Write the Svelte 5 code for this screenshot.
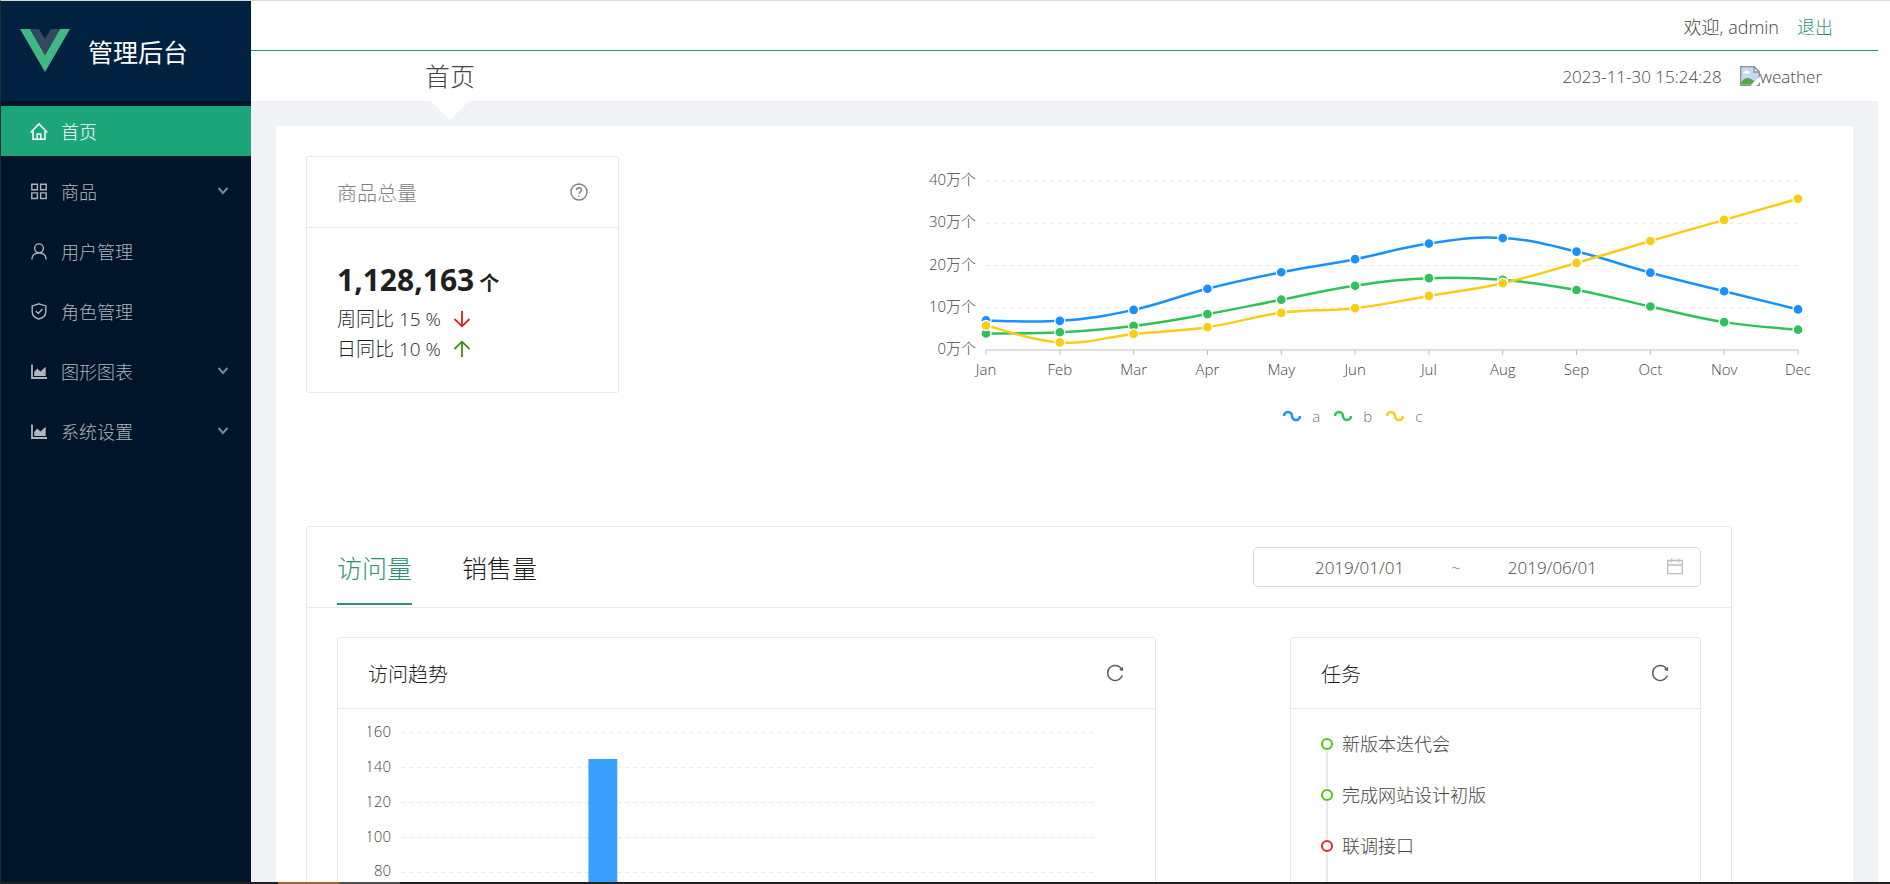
<script>
  const menu = [
    { title: '首页', icon: 'home', active: true },
    { title: '商品', icon: 'appstore', sub: true },
    { title: '用户管理', icon: 'user' },
    { title: '角色管理', icon: 'safety' },
    { title: '图形图表', icon: 'area', sub: true },
    { title: '系统设置', icon: 'area', sub: true }
  ];

  const months = ['Jan', 'Feb', 'Mar', 'Apr', 'May', 'Jun', 'Jul', 'Aug', 'Sep', 'Oct', 'Nov', 'Dec'];
  const series = [
    { name: 'a', color: '#1890ff', data: [7, 6.9, 9.5, 14.5, 18.4, 21.5, 25.2, 26.5, 23.3, 18.3, 13.9, 9.6] },
    { name: 'b', color: '#2fc25b', data: [3.9, 4.2, 5.7, 8.5, 11.9, 15.2, 17, 16.6, 14.2, 10.3, 6.6, 4.8] },
    { name: 'c', color: '#facc14', data: [5.8, 1.8, 3.8, 5.4, 8.8, 9.9, 12.8, 15.8, 20.6, 25.8, 30.8, 35.8] }
  ];
  const visits = [38, 52, 61, 145, 48, 38, 28, 39, 28, 39, 28, 38];

  const tasks = [
    { text: '新版本迭代会', color: '#52c41a' },
    { text: '完成网站设计初版', color: '#52c41a' },
    { text: '联调接口', color: '#e02a33' },
    { text: '功能验收', color: '#e02a33' }
  ];

  let tab = $state('visits');
  let startDate = $state('2019/01/01');
  let endDate = $state('2019/06/01');

  // 图表宽度跟随容器
  let lineWidth = $state(925);
  let barWidth = $state(757);

  const lineLeft = 88;
  const lineStep = $derived((lineWidth - lineLeft - 25) / 11);
  const lineY = (v) => 194 - v * 4.225;

  const barLeft = 33;
  const barPlot = $derived(barWidth - barLeft - 32);
  const barStep = $derived(barPlot / 12);
  const barY = (v) => 303 - v * 1.745;

  // 平滑曲线
  function smooth(data, step) {
    const p = data.map((v, i) => [lineLeft + i * step, lineY(v)]);
    let d = `M${p[0][0]},${p[0][1]}`;
    for (let i = 0; i < p.length - 1; i++) {
      const p0 = p[i - 1] || p[i];
      const p1 = p[i];
      const p2 = p[i + 1];
      const p3 = p[i + 2] || p2;
      d += `C${p1[0] + (p2[0] - p0[0]) * 0.2},${p1[1] + (p2[1] - p0[1]) * 0.2} `;
      d += `${p2[0] - (p3[0] - p1[0]) * 0.2},${p2[1] - (p3[1] - p1[1]) * 0.2} ${p2[0]},${p2[1]}`;
    }
    return d;
  }
</script>

{#snippet reload()}
  <svg width="20" height="20" viewBox="0 0 1024 1024" fill="currentColor">
    <path d="M909.1 209.3l-56.4 44.1C775.8 155.1 656.2 92 521.9 92 290 92 102.300 279.500 102 511.500 101.700 743.700 289.800 932 521.900 932c181.300 0 335.800-115 394.600-276.100 1.500-4.200-.7-8.900-4.900-10.300l-56.700-19.500a8 8 0 0 0-10.100 4.800c-1.800 5-3.800 10-5.900 14.900-17.300 41-42.100 77.800-73.700 109.400A344.770 344.770 0 0 1 655.900 829c-42.300 17.900-87.400 27-133.800 27-46.500 0-91.500-9.100-133.800-27A341.500 341.500 0 0 1 279 755.200a342.160 342.160 0 0 1-73.700-109.400c-17.900-42.400-27-87.400-27-133.900s9.100-91.500 27-133.900c17.300-41 42.100-77.800 73.700-109.400 31.600-31.600 68.400-56.400 109.300-73.800 42.300-17.900 87.400-27 133.800-27 46.500 0 91.500 9.100 133.800 27a341.500 341.500 0 0 1 109.300 73.800c9.900 9.900 19.200 20.400 27.800 31.400l-60.200 47a8 8 0 0 0 3 14.100l175.600 43c5 1.200 9.900-2.600 9.900-7.700l.8-180.900c-.1-6.600-7.800-10.300-13-6.200z" />
  </svg>
{/snippet}

<div class="layout">
  <aside class="sider">
    <div class="logo">
      <svg width="50" height="43" viewBox="0 0 50 43">
        <path d="M0 0h10l15 26L40 0h10L25 43z" fill="#41b883" />
        <path d="M10 0h9l6 10 6-10h9L25 26z" fill="#35495e" />
      </svg>
      <h1>管理后台</h1>
    </div>
    <nav>
      {#each menu as item}
        <a href="#{item.title}" class="menu-item" class:active={item.active}>
          <svg class="menu-icon" width="18" height="18" viewBox="0 0 18 18" fill="none" stroke="currentColor">
            {#if item.icon === 'home'}
              <path d="M.6 10.500 9 1.900 17.400 10.500M3 9V17.200H15V9M7.200 17V12H10.800V17" stroke-width="1.500" />
            {:else if item.icon === 'appstore'}
              <path d="M1.800 2.200h5.600v5.600H1.800zM10.600 2.200h5.600v5.600h-5.600zM1.800 10.900h5.600v5.600H1.800zM10.600 10.900h5.600v5.600h-5.600z" stroke-width="1.400" />
            {:else if item.icon === 'user'}
              <circle cx="9" cy="6.300" r="4.400" stroke-width="1.400" />
              <path d="M1.800 17.500C1.800 13.500 5 10.700 9 10.700S16.200 13.500 16.200 17.500" stroke-width="1.400" />
            {:else if item.icon === 'safety'}
              <path d="M9 1.800 15.800 3.900V10C15.800 13.500 12.500 16 9 17 5.500 16 2.200 13.500 2.200 10V3.900zM5.800 9 8.300 11.500 12.400 7" stroke-width="1.400" />
            {:else}
              <path d="M2 2.500V16H17" stroke-width="1.800" />
              <path d="M4.200 14V10L7.300 6.500 10.500 9.500 15.700 4.700V14z" fill="currentColor" stroke="none" />
            {/if}
          </svg>
          <span>{item.title}</span>
          {#if item.sub}
            <svg class="arrow" width="12" height="8" viewBox="0 0 12 8" fill="none" stroke="currentColor">
              <path d="M1.500 1 6 6 10.500 1" stroke-width="2" />
            </svg>
          {/if}
        </a>
      {/each}
    </nav>
  </aside>

  <div class="body">
    <header class="header-top">
      <span>欢迎, admin</span>
      <a href="#logout">退出</a>
    </header>
    <div class="header-bottom">
      <h2 class="page-title">首页</h2>
      <div class="weather">
        <time>2023-11-30 15:24:28</time>
        <span class="weather-img">
          <svg width="20" height="20" viewBox="0 0 20 20">
            <path d="M.7.700h13.300L19.300 6v13.300H.7z" fill="#c5d8f5" stroke="#8f8f8f" stroke-width="1.300" />
            <path d="M14 .7V6h5.300z" fill="#fff" stroke="#8f8f8f" stroke-width="1.300" />
            <path d="M3 7.500Q3 5.500 5.200 5.500 6 3.500 8 5 10 5.200 10 7.500z" fill="#fff" />
            <path d="M1.400 18.600V16Q5 10.500 10 12.500L14.500 15 11 18.600z" fill="#58a93c" />
            <path d="M10.500 20 20 10.500V16L16 20z" fill="#fff" />
          </svg>weather
        </span>
      </div>
    </div>

    <main>
      <div class="content">
        <div class="overview">
          <section class="card">
            <div class="card-head muted">
              <h3>商品总量</h3>
              <button class="icon-btn" aria-label="help">
                <svg width="18" height="18" viewBox="0 0 18 18" fill="none" stroke="currentColor">
                  <circle cx="9" cy="9" r="8" stroke-width="1.400" />
                  <path d="M6.500 7.200C6.500 4 11.500 4 11.500 7.100 11.500 9 9 8.800 9 10.800" stroke-width="1.400" />
                  <circle cx="9" cy="13" r=".8" fill="currentColor" stroke="none" />
                </svg>
              </button>
            </div>
            <div class="card-body">
              <div class="total">1,128,163<small>个</small></div>
              <div class="ratio">
                周同比 15 %
                <svg width="18" height="18" viewBox="0 0 18 18" fill="none" stroke="#e0201b" stroke-width="1.800">
                  <path d="M9 1V16M1.500 9 9 16.300 16.500 9" />
                </svg>
              </div>
              <div class="ratio">
                日同比 10 %
                <svg width="18" height="18" viewBox="0 0 18 18" fill="none" stroke="#3f8f12" stroke-width="1.800">
                  <path d="M9 17V2M1.500 9 9 1.700 16.500 9" />
                </svg>
              </div>
            </div>
          </section>

          <div class="line-chart" bind:clientWidth={lineWidth}>
            <svg width={lineWidth} height="290">
              {#each [0, 10, 20, 30, 40] as v}
                {#if v > 0}
                  <line class="grid" x1={lineLeft} x2={lineWidth - 25} y1={lineY(v)} y2={lineY(v)} />
                {/if}
                <text x={lineLeft - 10} y={lineY(v) + 4} text-anchor="end">{v}万个</text>
              {/each}
              <line class="axis" x1={lineLeft} x2={lineWidth - 25} y1="194" y2="194" />
              {#each months as m, i}
                <line class="axis" x1={lineLeft + i * lineStep} x2={lineLeft + i * lineStep} y1="194" y2="199" />
                <text x={lineLeft + i * lineStep} y="219" text-anchor="middle">{m}</text>
              {/each}
              {#each series as s}
                <path d={smooth(s.data, lineStep)} fill="none" stroke={s.color} stroke-width="2.500" />
              {/each}
              {#each series as s}
                {#each s.data as v, i}
                  <circle cx={lineLeft + i * lineStep} cy={lineY(v)} r="5" fill={s.color} stroke="#fff" stroke-width="1.300" />
                {/each}
              {/each}
            </svg>
            <ul class="legend">
              {#each series as s}
                <li>
                  <svg width="18" height="12" viewBox="0 0 18 12" fill="none" stroke={s.color} stroke-width="2.500">
                    <path d="M1 6A4 4 0 0 1 9 6A4 4 0 0 0 17 6" />
                  </svg>
                  {s.name}
                </li>
              {/each}
            </ul>
          </div>
        </div>

        <section class="card stats">
          <div class="tabs-head">
            <div class="tabs">
              <button class:on={tab === 'visits'} onclick={() => (tab = 'visits')}>访问量</button>
              <button class:on={tab === 'sales'} onclick={() => (tab = 'sales')}>销售量</button>
            </div>
            <div class="range">
              <input type="text" aria-label="开始日期" bind:value={startDate} />
              <span>~</span>
              <input type="text" aria-label="结束日期" bind:value={endDate} />
              <svg width="18" height="18" viewBox="0 0 18 18" fill="none" stroke="#bfbfbf" stroke-width="1.400">
                <path d="M1.700 2.500H16.300V15.600H1.700zM1.700 7H16.300M5.500 .5V4.500M12.500 .5V4.500" />
              </svg>
            </div>
          </div>

          <div class="panels">
            <section class="card">
              <div class="card-head">
                <h3>访问趋势</h3>
                <button class="icon-btn" aria-label="reload">{@render reload()}</button>
              </div>
              <div class="bar-chart">
                <div bind:clientWidth={barWidth}>
                  <svg width={barWidth} height="340">
                    {#each [0, 20, 40, 60, 80, 100, 120, 140, 160] as v}
                      <line class="grid" x1={barLeft} x2={barLeft + barPlot} y1={barY(v)} y2={barY(v)} />
                      <text x={barLeft - 10} y={barY(v) + 4} text-anchor="end">{v}</text>
                    {/each}
                    {#each visits as v, i}
                      <rect x={barLeft + (i + 0.25) * barStep} y={barY(v)} width={barStep / 2} height={barY(0) - barY(v)} fill="#3aa0ff" />
                    {/each}
                  </svg>
                </div>
              </div>
            </section>

            <section class="card">
              <div class="card-head">
                <h3>任务</h3>
                <button class="icon-btn" aria-label="reload">{@render reload()}</button>
              </div>
              <ul class="timeline">
                {#each tasks as t}
                  <li><i style="border-color: {t.color}"></i>{t.text}</li>
                {/each}
              </ul>
            </section>
          </div>
        </section>
      </div>
    </main>
  </div>
</div>
<div class="taskbar"><i></i><b></b></div>

<style>
  :global(body) {
    margin: 0;
    background: #fff;
  }

  :global(#app) {
    display: flex;
    flex-direction: column;
    height: 100vh;
    overflow: hidden;
    font-family: 'Open Sans', 'Noto Sans CJK SC', sans-serif;
    font-size: 17px;
    font-weight: 300;
    color: #454545;
  }

  h1, h2, h3, ul {
    margin: 0;
    padding: 0;
    font-weight: inherit;
    list-style: none;
  }

  svg {
    display: block;
    flex: none;
  }

  a {
    color: #2d9275;
    text-decoration: none;
  }

  button {
    padding: 0;
    border: none;
    background: none;
    font: inherit;
    color: inherit;
    cursor: pointer;
  }

  .layout {
    flex: 1;
    min-height: 0;
    display: flex;
    border-top: 1px solid #d9d9d9;
    border-left: 1px solid #1d2b36;
    overflow: hidden;
  }

  .sider {
    flex: none;
    width: 250px;
    background: #001529;
  }

  .logo {
    display: flex;
    align-items: center;
    gap: 18px;
    height: 98px;
    padding: 0 0 2px 19px;
    background: #002140;
    color: #fff;
  }

  .logo h1 {
    padding-top: 3px;
    font-size: 25px;
    font-weight: 400;
    line-height: 38px;
  }

  nav {
    display: flex;
    flex-direction: column;
    gap: 10px;
    padding-top: 5px;
  }

  .menu-item {
    display: flex;
    align-items: center;
    height: 50px;
    padding: 0 22px 0 29px;
    font-size: 18px;
    color: #aeb5bb;
  }

  .menu-item.active {
    background: #1da57a;
    color: #fff;
  }

  .menu-icon {
    margin-right: 13px;
  }

  .arrow {
    margin-left: auto;
    color: #7d8791;
  }

  .body {
    flex: 1;
    min-width: 0;
    margin-right: 12px;
    display: flex;
    flex-direction: column;
  }

  .header-top {
    flex: none;
    display: flex;
    align-items: center;
    justify-content: flex-end;
    gap: 18px;
    height: 49px;
    padding: 0 45px;
    border-bottom: 1px solid #2d9275;
    font-size: 18px;
  }

  .header-bottom {
    flex: none;
    display: flex;
    align-items: center;
    justify-content: space-between;
    height: 50px;
    padding-right: 56px;
  }

  .page-title {
    position: relative;
    width: 398px;
    text-align: center;
    font-size: 25px;
    line-height: 50px;
  }

  .page-title::after {
    content: '';
    position: absolute;
    top: 100%;
    left: 50%;
    margin-left: -19px;
    border: 19px solid transparent;
    border-top-color: #fff;
    border-bottom: none;
  }

  .weather,
  .weather-img {
    display: flex;
    align-items: center;
  }

  .weather {
    gap: 18px;
  }

  main {
    flex: 1;
    min-height: 0;
    overflow-y: auto;
    scrollbar-width: none;
    padding: 25px 25px 0;
    background: #f0f2f5;
  }

  .content {
    padding: 30px;
    background: #fff;
  }

  .overview {
    display: flex;
    align-items: flex-start;
    justify-content: space-between;
    height: 370px;
  }

  .overview .card {
    width: 311px;
  }

  .card {
    border: 1px solid #e8e8e8;
    border-radius: 3px;
  }

  .card-head {
    display: flex;
    align-items: center;
    justify-content: space-between;
    height: 70px;
    padding: 0 30px;
    border-bottom: 1px solid #e8e8e8;
    color: #1f1f1f;
  }

  .card-head h3 {
    padding-top: 3px;
    font-size: 20px;
    line-height: 30px;
  }

  .icon-btn {
    color: #595959;
  }

  .muted,
  .muted .icon-btn {
    color: #808080;
  }

  .card-body {
    padding: 32px 30px 28px;
    color: #1f1f1f;
  }

  .total {
    font-size: 30px;
    font-weight: 700;
    line-height: 40px;
  }

  .total small {
    margin-left: 5px;
    font-size: 20px;
  }

  .ratio {
    display: flex;
    align-items: center;
    gap: 12px;
    font-size: 19px;
    line-height: 30px;
  }

  .line-chart {
    width: 61%;
    overflow: hidden;
  }

  .line-chart,
  .bar-chart {
    font-size: 15px;
  }

  text {
    fill: #454545;
  }

  .grid {
    stroke: #e8e8e8;
    stroke-dasharray: 4 4;
  }

  .axis {
    stroke: #bfbfbf;
  }

  .legend {
    display: flex;
    justify-content: center;
    gap: 14px;
    margin-top: -40px;
    padding-right: 15px;
    color: #707070;
    line-height: 20px;
  }

  .legend li {
    display: flex;
    align-items: center;
    gap: 11px;
  }

  .stats {
    width: 94%;
    box-sizing: border-box;
  }

  .tabs-head {
    display: flex;
    align-items: center;
    justify-content: space-between;
    height: 80px;
    padding: 0 30px;
    border-bottom: 1px solid #e8e8e8;
  }

  .tabs {
    display: flex;
    gap: 50px;
    font-size: 25px;
    color: #1f1f1f;
  }

  .tabs button {
    height: 76px;
    border-top: 2px solid transparent;
    border-bottom: 2px solid transparent;
  }

  .tabs .on {
    color: #2d9275;
    border-bottom-color: #2d9275;
  }

  .range {
    display: flex;
    align-items: center;
    width: 448px;
    height: 40px;
    padding: 0 16px 0 14px;
    box-sizing: border-box;
    border: 1px solid #d9d9d9;
    border-radius: 5px;
    color: #707070;
  }

  .range input {
    flex: 1;
    min-width: 0;
    padding: 0;
    border: none;
    outline: none;
    background: none;
    text-align: center;
    font: inherit;
    color: #454545;
  }

  .range svg {
    margin-left: 22px;
  }

  .panels {
    display: grid;
    grid-template-columns: 819fr 412fr;
    gap: 134px;
    padding: 29px 30px;
  }

  .bar-chart {
    padding: 0 30px;
  }

  .timeline {
    padding: 20px 30px;
    font-size: 18px;
  }

  .timeline li {
    position: relative;
    height: 51px;
    padding-left: 21px;
    line-height: 30px;
  }

  .timeline li::before {
    content: '';
    position: absolute;
    top: 22px;
    bottom: -8px;
    left: 5px;
    width: 2px;
    background: #e8e8e8;
  }

  .timeline i {
    position: absolute;
    top: 9px;
    left: 0;
    width: 8px;
    height: 8px;
    border: 2px solid;
    border-radius: 50%;
  }

  .taskbar {
    flex: none;
    display: flex;
    height: 2px;
    padding-left: 278px;
    background: #202020;
  }

  .taskbar i {
    width: 61px;
    background: #a8632e;
  }

  .taskbar b {
    width: 61px;
    background: #505050;
  }
</style>
